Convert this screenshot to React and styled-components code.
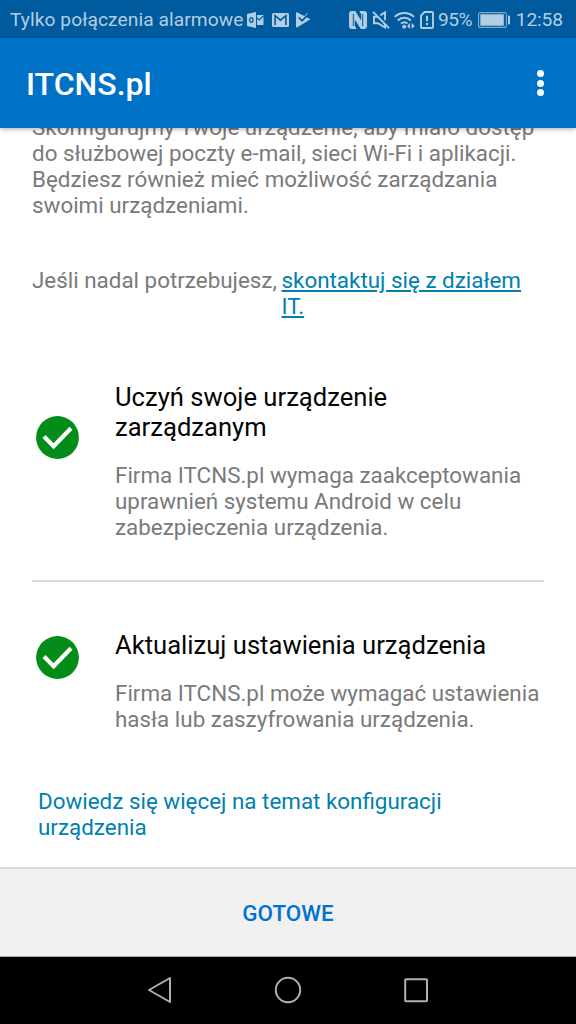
import React from 'react';
import styled, { createGlobalStyle } from 'styled-components';

const GlobalStyle = createGlobalStyle`
  * { box-sizing: border-box; }
  body { margin: 0; background: #fff; font-family: Roboto, "Noto Sans", sans-serif; }
  p, h1, h2 { margin: 0; font-weight: 400; }
`;

const Screen = styled.div`
  width: 576px;
  height: 1024px;
  display: flex;
  flex-direction: column;
  overflow: hidden;
  background: #fff;
`;

const StatusBar = styled.div`
  flex: 0 0 38px;
  display: flex;
  align-items: center;
  padding: 2px 13px 0 10px;
  background: #005a9e;
  color: #b3cee2;
  font-size: 19.2px;
  line-height: 24px;
  white-space: nowrap;

  svg { display: block; flex: none; }
`;

const Carrier = styled.span`
  width: 237px;
  letter-spacing: 0.07px;
`;

const StatusIcons = styled.div`
  display: flex;
  align-items: center;
  justify-content: space-between;
  width: ${(p) => p.$width}px;
  margin-right: ${(p) => p.$after}px;
`;

const Percent = styled.span`
  width: 40px;
  font-size: 19.2px;
  letter-spacing: -0.5px;
`;

const Clock = styled.span`
  margin-left: auto;
  letter-spacing: -0.1px;
`;

const AppBar = styled.header`
  flex: 0 0 90px;
  z-index: 1;
  display: flex;
  align-items: center;
  justify-content: space-between;
  padding: 0 32px 0 26px;
  background: #0072c6;
  color: #fff;
  box-shadow: 0 1px 5px rgba(0, 0, 0, 0.35);
`;

const AppTitle = styled.h1`
  font-size: 32px;
  font-weight: 500;
  line-height: 38px;
  padding-top: 1px;
`;

const MenuButton = styled.button`
  display: flex;
  flex-direction: column;
  gap: 2.7px;
  padding: 0;
  border: 0;
  background: none;
`;

const Dot = styled.span`
  width: 7px;
  height: 7px;
  border-radius: 50%;
  background: #fff;
`;

const Content = styled.main`
  flex: 1 1 0;
  min-height: 0;
  overflow: hidden;
  padding: 0 32px;
  white-space: nowrap;
`;

const Body = styled.p`
  color: #7a7a7a;
  font-size: 22.4px;
  line-height: 26px;
`;

const Intro = styled(Body)`
  margin-top: -14px;
`;

const Help = styled(Body)`
  display: flex;
  align-items: flex-start;
  justify-content: space-between;
  width: 489px;
  margin-top: 49px;
`;

const HelpLink = styled.a`
  color: #007fb0;
  text-decoration: underline;
  text-decoration-thickness: 1.6px;
  text-underline-offset: 2px;
`;

const Step = styled.section`
  display: flex;
  padding-left: 4px;
  margin-top: ${(p) => p.$top}px;
`;

const StepIcon = styled.div`
  flex: 0 0 79px;
  padding-top: ${(p) => p.$top}px;

  svg { display: block; }
`;

const StepTitle = styled.h2`
  color: #050505;
  font-size: 25.6px;
  line-height: 30px;
  margin-bottom: 20px;
`;

const Divider = styled.hr`
  height: 2px;
  margin: 40px 0 0;
  border: 0;
  background: #dadada;
`;

const LearnMore = styled.a`
  display: block;
  margin: 56px 0 0 6px;
  color: #007fb0;
  font-size: 22.4px;
  line-height: 26px;
`;

const ActionBar = styled.footer`
  flex: 0 0 90px;
  display: flex;
  align-items: center;
  justify-content: center;
  background: #f1f1f1;
  border-top: 2px solid #dadada;
  border-bottom: 1px solid #a9a9a9;
`;

const DoneButton = styled.button`
  padding: 0;
  border: 0;
  background: none;
  color: #0072d0;
  font: 500 22.4px/26px Roboto, sans-serif;
`;

const NavBar = styled.nav`
  flex: 0 0 67px;
  display: flex;
  align-items: center;
  justify-content: center;
  gap: 98px;
  padding-bottom: 1px;
  background: #000;

  svg { display: block; }
`;

const CheckBadge = () => (
  <svg width="43" height="43" viewBox="0 0 43 43">
    <circle cx="21.5" cy="21.5" r="21.4" fill="#038c17" />
    <path d="M8 20.6l9.6 9.6L35 12.2" fill="none" stroke="#fff" strokeWidth="4.2" />
  </svg>
);

const OutlookIcon = () => (
  <svg width="17" height="16" viewBox="0 0 17 16">
    <path d="M0 2l9-2v16l-9-2z" fill="#b3cee2" />
    <ellipse cx="4.3" cy="8" rx="1.7" ry="2.3" fill="none" stroke="#005a9e" strokeWidth="1.3" />
    <path d="M10 3h6.5v10H10z" fill="#b3cee2" />
    <path d="M10 6l2 2 4.5-4" fill="none" stroke="#005a9e" strokeWidth="1.1" />
  </svg>
);

const GmailIcon = () => (
  <svg width="17" height="14" viewBox="0 0 17 14">
    <rect width="17" height="14" rx="1.5" fill="#b3cee2" />
    <path d="M3.1 12V2.6l5.4 4.5 5.4-4.5V12" fill="none" stroke="#005a9e" strokeWidth="1.6" />
  </svg>
);

const PlayCheckIcon = () => (
  <svg width="15" height="16" viewBox="0 0 15 16">
    <path d="M0 1.2C0 .3.6 0 1.4.5L14.5 7.3 1.4 15.2C.7 15.6 0 15.3 0 14.5z" fill="#b3cee2" />
    <path d="M2.8 5.4l3.2 3.2L13 1.4" fill="none" stroke="#005a9e" strokeWidth="1.8" />
    <path d="M3.4 4.4L6 7l5.6-5.8" fill="none" stroke="#b3cee2" strokeWidth="1" />
  </svg>
);

const NfcIcon = () => (
  <svg width="18" height="18" viewBox="0 0 18 18">
    <path d="M3 0h3.2l6 9.4V3.4L10.4 0H15a3 3 0 0 1 3 3v12a3 3 0 0 1-3 3h-3.2l-6-9.4v6L7.6 18H3a3 3 0 0 1-3-3V3a3 3 0 0 1 3-3z" fill="#b3cee2" />
    <path d="M4.3 2.8v12.4M13.7 2.8v12.4" stroke="#005a9e" strokeWidth="1" />
  </svg>
);

const MuteIcon = () => (
  <svg width="18" height="18" viewBox="0 0 18 18" fill="none" stroke="#b3cee2" strokeWidth="1.9">
    <path d="M6 5.8H2v6.4h4l7 4.3v-3.5M8.3 4.4L13 1.4v7.8" />
    <path d="M1 .8l16 16.4" />
  </svg>
);

const WifiIcon = () => (
  <svg width="21" height="18" viewBox="0 0 21 18" fill="none" stroke="#b3cee2" strokeWidth="2">
    <path d="M.7 5.9c5.4-5.2 13.8-5.2 19.2 0M3.8 9.4c3.8-3.5 9.2-3.5 13 0M7 12.6c2-1.7 4.6-1.7 6.5-.1" />
    <circle cx="10.2" cy="15.7" r="1.9" fill="#b3cee2" stroke="none" />
    <path d="M16 12v6l-3-3zM17.6 12v6l3.2-3z" fill="#b3cee2" stroke="none" />
  </svg>
);

const SimIcon = () => (
  <svg width="14" height="18" viewBox="0 0 14 18">
    <path d="M4.6 1H12a1 1 0 0 1 1 1v14a1 1 0 0 1-1 1H2a1 1 0 0 1-1-1V4.6z" fill="none" stroke="#b3cee2" strokeWidth="1.9" />
    <path d="M7 4.8v5.5M7 12v2.2" stroke="#b3cee2" strokeWidth="2" />
  </svg>
);

const BatteryIcon = () => (
  <svg width="33" height="16" viewBox="0 0 33 16">
    <rect x=".6" y=".6" width="27.8" height="14.8" rx="2" fill="none" stroke="#b3cee2" strokeOpacity=".7" strokeWidth="1.1" />
    <rect x="2.3" y="2.3" width="23.5" height="11.4" fill="#b3cee2" />
    <rect x="30" y="3.7" width="2" height="8.6" fill="#b3cee2" />
  </svg>
);

const BackIcon = () => (
  <svg width="30" height="30" viewBox="0 0 30 30">
    <path d="M25 3v24L4 15z" fill="none" stroke="#b0b0b0" strokeWidth="2" strokeLinejoin="round" />
  </svg>
);

const HomeIcon = () => (
  <svg width="30" height="30" viewBox="0 0 30 30">
    <circle cx="15" cy="15" r="12.2" fill="none" stroke="#b0b0b0" strokeWidth="2" />
  </svg>
);

const RecentsIcon = () => (
  <svg width="30" height="30" viewBox="0 0 30 30">
    <rect x="4.2" y="4.2" width="21.8" height="22" rx=".6" fill="none" stroke="#b0b0b0" strokeWidth="2" />
  </svg>
);

export default function App() {
  return (
    <>
      <GlobalStyle />
      <Screen>
        <StatusBar>
          <Carrier>Tylko połączenia alarmowe</Carrier>
          <StatusIcons $width={64} $after={38}>
            <OutlookIcon />
            <GmailIcon />
            <PlayCheckIcon />
          </StatusIcons>
          <StatusIcons $width={85} $after={4}>
            <NfcIcon />
            <MuteIcon />
            <WifiIcon />
            <SimIcon />
          </StatusIcons>
          <Percent>95%</Percent>
          <BatteryIcon />
          <Clock>12:58</Clock>
        </StatusBar>

        <AppBar>
          <AppTitle>ITCNS.pl</AppTitle>
          <MenuButton aria-label="Menu">
            <Dot />
            <Dot />
            <Dot />
          </MenuButton>
        </AppBar>

        <Content>
          <Intro>
            Skonfigurujmy Twoje urządzenie, aby miało dostęp<br />
            do służbowej poczty e-mail, sieci Wi-Fi i aplikacji.<br />
            Będziesz również mieć możliwość zarządzania<br />
            swoimi urządzeniami.
          </Intro>
          <Help as="div">
            <span>Jeśli nadal potrzebujesz,</span>
            <HelpLink>
              skontaktuj się z działem<br />
              IT.
            </HelpLink>
          </Help>

          <Step $top={63}>
            <StepIcon $top={34}><CheckBadge /></StepIcon>
            <div>
              <StepTitle>Uczyń swoje urządzenie<br />zarządzanym</StepTitle>
              <Body>
                Firma ITCNS.pl wymaga zaakceptowania<br />
                uprawnień systemu Android w celu<br />
                zabezpieczenia urządzenia.
              </Body>
            </div>
          </Step>
          <Divider />
          <Step $top={48}>
            <StepIcon $top={6}><CheckBadge /></StepIcon>
            <div>
              <StepTitle>Aktualizuj ustawienia urządzenia</StepTitle>
              <Body>
                Firma ITCNS.pl może wymagać ustawienia<br />
                hasła lub zaszyfrowania urządzenia.
              </Body>
            </div>
          </Step>

          <LearnMore>
            Dowiedz się więcej na temat konfiguracji<br />
            urządzenia
          </LearnMore>
        </Content>

        <ActionBar>
          <DoneButton>GOTOWE</DoneButton>
        </ActionBar>
        <NavBar>
          <BackIcon />
          <HomeIcon />
          <RecentsIcon />
        </NavBar>
      </Screen>
    </>
  );
}
